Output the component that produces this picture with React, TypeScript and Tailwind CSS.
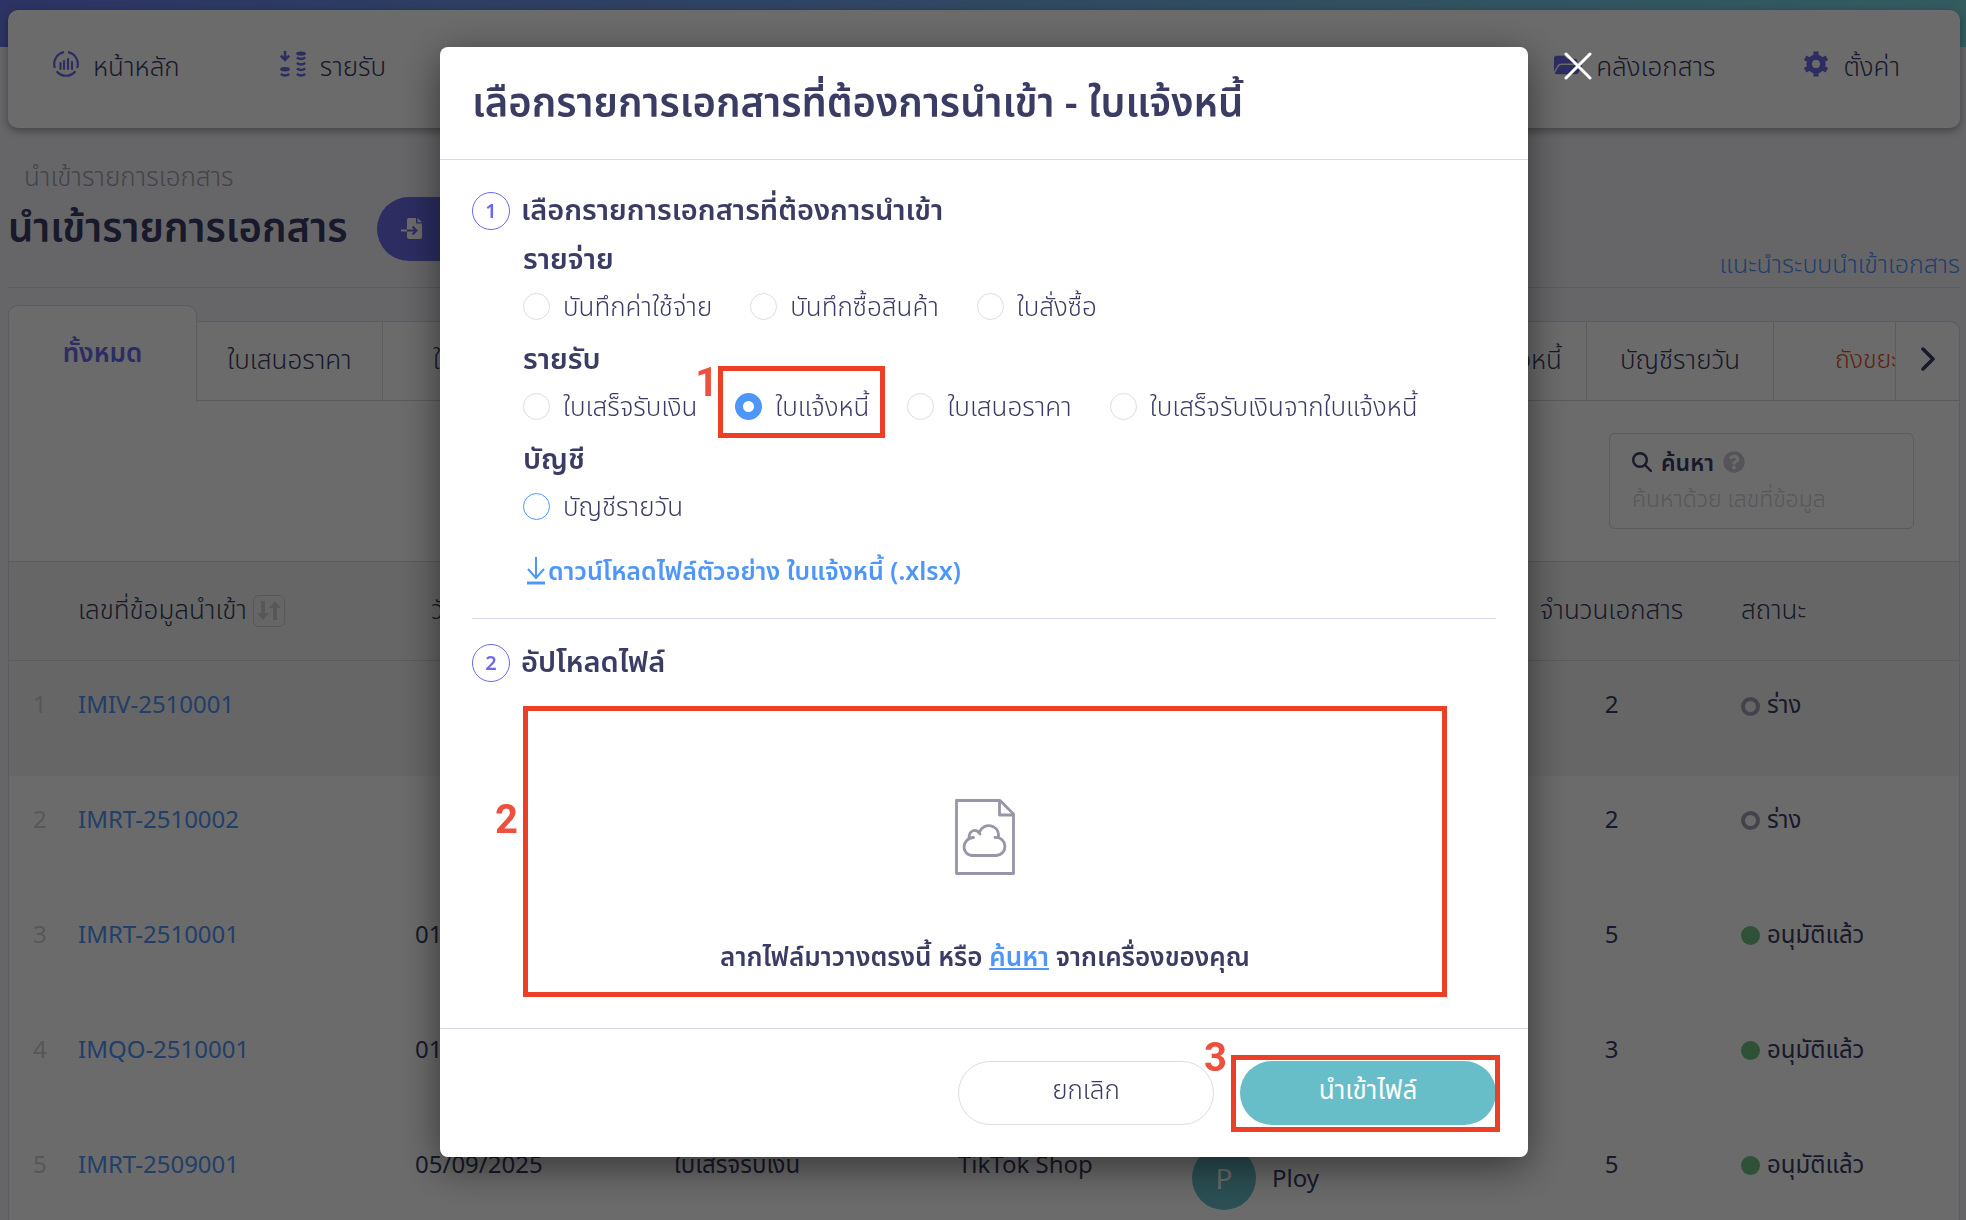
import { useState } from "react";
import type { ReactNode } from "react";
import { FaFolderOpen, FaQuestionCircle } from "react-icons/fa";

// -------- DATA --------

const EXPENSE_TYPES = ["บันทึกค่าใช้จ่าย", "บันทึกซื้อสินค้า", "ใบสั่งซื้อ"];
const INCOME_TYPES = ["ใบเสร็จรับเงิน", "ใบแจ้งหนี้", "ใบเสนอราคา", "ใบเสร็จรับเงินจากใบแจ้งหนี้"];
const ACCOUNT_TYPES = ["บัญชีรายวัน"];

interface ImportRow {
  code: string;
  date?: string;
  type?: string;
  channel?: string;
  owner?: string;
  count: number;
  approved: boolean;
}

const ROWS: ImportRow[] = [
  { code: "IMIV-2510001", count: 2, approved: false },
  { code: "IMRT-2510002", count: 2, approved: false },
  { code: "IMRT-2510001", date: "01/10/2025", count: 5, approved: true },
  { code: "IMQO-2510001", date: "01/10/2025", count: 3, approved: true },
  {
    code: "IMRT-2509001",
    date: "05/09/2025",
    type: "ใบเสร็จรับเงิน",
    channel: "TikTok Shop",
    owner: "Ploy",
    count: 5,
    approved: true,
  },
];

// -------- ICONS --------

function HomeIcon() {
  return (
    <svg viewBox="0 0 26 26" className="size-[26px]" fill="none" stroke="currentColor" strokeWidth="2.2">
      <path d="M11 1.2A12 12 0 0 0 1.9 17M15 1.2A12 12 0 0 1 24.1 17M3.6 20.2a12 12 0 0 0 18.8 0" />
      <path d="M7.5 12v6M11 10v8M15 8v10M19 11v7" strokeLinecap="round" />
    </svg>
  );
}

function CoinsIcon() {
  return (
    <svg viewBox="0 0 26 26" className="size-[26px]" fill="none" stroke="currentColor" strokeWidth="2.6">
      <path d="M5 0v8M.8 4.600l4.200 4.200 4.200-4.200" />
      <ellipse cx="5" cy="18.2" rx="4.8" ry="2.2" fill="currentColor" stroke="none" />
      <path d="M.8 23q4.2 3 8.4 0M16.8 6.500q4.200 3 8.400 0M16.800 12q4.200 3 8.400 0M16.800 17.500q4.200 3 8.400 0M16.800 23q4.200 3 8.400 0" />
      <ellipse cx="21" cy="2.600" rx="4.800" ry="2.200" fill="currentColor" stroke="none" />
    </svg>
  );
}

function GearIcon() {
  return (
    <svg viewBox="0 0 26 26" className="size-[26px]" fill="none" stroke="currentColor">
      <circle cx="13" cy="13" r="6.800" strokeWidth="5.600" />
      <path
        d="M13 6V.5M13 20v5.500M6.940 9.500 2.170 6.750M19.060 16.500l4.770 2.750M6.940 16.500l-4.770 2.750M19.060 9.500l4.770-2.750"
        strokeWidth="5.200"
      />
    </svg>
  );
}

function ImportIcon() {
  return (
    <svg viewBox="0 0 22 22" className="size-[22px]" fill="none">
      <path d="M8 0h7v5.500h6V19a2 2 0 0 1-2 2H8a2 2 0 0 1-2-2V2a2 2 0 0 1 2-2z" fill="#fff" />
      <path d="M16.500 0 21 4.300h-4.500z" fill="#fff" />
      <path d="M0 12.500h6" stroke="#fff" strokeWidth="2" />
      <path d="M6 12.500h9M11.500 8.500l4 4-4 4" stroke="#6b6be9" strokeWidth="2" />
    </svg>
  );
}

function SortIcon() {
  return (
    <svg viewBox="0 0 24 20" className="h-5 w-6" fill="currentColor">
      <path d="M4 0h4v12h4l-6 7-6-7h4zM16 19h4V7h4l-6-7-6 7h4z" />
    </svg>
  );
}

function SearchIcon() {
  return (
    <svg viewBox="0 0 20 20" className="size-5" fill="none" stroke="currentColor" strokeWidth="2.400">
      <circle cx="8" cy="8" r="6.800" />
      <path d="m13 13 6 6" strokeLinecap="round" />
    </svg>
  );
}

function CloudFileIcon() {
  return (
    <svg viewBox="0 0 60 76" className="h-[76px] w-[60px] text-[#9796a8]" fill="none" stroke="currentColor" strokeWidth="2.800" strokeLinejoin="round">
      <path d="M1.500 1.500H45L58.500 15v59.500h-57z" />
      <path d="M44.500 1.500V16h14" />
      <path d="M18 56.500C5 56 7 39 18.500 38.500M14 39c0-8 7-10 11-4M24.500 33c4-10 20-8 19 5M40 38.500c12-1 14 17 1 18H18" strokeLinecap="round" />
    </svg>
  );
}

// -------- PAGE BEHIND THE DIALOG --------

function NavLink({ icon, children }: { icon: ReactNode; children: ReactNode }) {
  return (
    <a href="#" className="flex items-start gap-[14px] text-[#3b3c64]">
      <span className="pt-[5px] text-[#6b6be9]">{icon}</span>
      <span className="leading-10">{children}</span>
    </a>
  );
}

function TopNav() {
  return (
    <nav className="flex h-[118px] items-start justify-between rounded-[10px] bg-white pt-9 pr-[60px] pl-[45px] text-[26px] shadow-[0_3px_8px_rgba(0,0,0,0.35)]">
      <div className="flex gap-[100px]">
        <NavLink icon={<HomeIcon />}>หน้าหลัก</NavLink>
        <NavLink icon={<CoinsIcon />}>รายรับ</NavLink>
      </div>
      <div className="flex gap-[88px]">
        <NavLink icon={<FaFolderOpen size={28} />}>คลังเอกสาร</NavLink>
        <NavLink icon={<GearIcon />}>ตั้งค่า</NavLink>
      </div>
    </nav>
  );
}

function Tabs() {
  return (
    <div className="flex items-end text-[26px]">
      <button className="relative z-10 -mb-px h-[97px] w-[189px] rounded-t-[10px] border border-b-0 border-[#d8d8e4] bg-white pb-1 font-semibold text-[#6b6be9]">
        ทั้งหมด
      </button>
      <div className="flex h-20 min-w-0 flex-1 justify-between overflow-hidden rounded-tr-[10px] border border-l-0 border-[#d8d8e4] bg-white">
        <div className="flex *:pb-1">
          <button className="w-[186px] border-r border-[#d8d8e4]">ใบเสนอราคา</button>
          <button className="w-[186px] pl-2">ใบแจ้งหนี้</button>
        </div>
        <div className="flex *:pb-1">
          <button className="px-6">ใบเสร็จรับเงินจากใบแจ้งหนี้</button>
          <button className="w-[187px] border-l border-[#d8d8e4]">บัญชีรายวัน</button>
          <button className="w-[122px] overflow-hidden border-l border-[#d8d8e4] pl-[61px] text-left text-[25px] whitespace-nowrap text-[#e0512f]">
            ถังขยะ
          </button>
          <button aria-label="ถัดไป" className="flex w-16 items-center justify-center border-l border-[#d8d8e4]">
            <svg viewBox="0 0 14 24" className="h-6 w-[14px]" fill="none" stroke="currentColor" strokeWidth="3.500" strokeLinecap="round" strokeLinejoin="round">
              <path d="m2 2 10 10L2 22" />
            </svg>
          </button>
        </div>
      </div>
    </div>
  );
}

function SearchBox() {
  return (
    <div className="flex h-40 items-start justify-end pt-8 pr-[45px]">
      <div className="h-24 w-[305px] rounded-md border border-[#d8d8e4] px-[22px] pt-3 text-[23px]">
        <label htmlFor="search" className="flex h-8 items-center gap-[9px] font-semibold">
          <SearchIcon />
          ค้นหา
          <FaQuestionCircle size={22} className="text-[#c9c9d4]" />
        </label>
        <input id="search" placeholder="ค้นหาด้วย เลขที่ข้อมูล" className="h-10 w-full outline-none placeholder:text-[#cfcfd4]" />
      </div>
    </div>
  );
}

function Status({ approved }: { approved: boolean }) {
  return (
    <span className="flex items-center gap-[7px]">
      {approved ? (
        <span className="mt-1 size-[19px] rounded-full bg-[#6fc083]" />
      ) : (
        <span className="mt-1 size-[19px] rounded-full border-4 border-[#a09fb2]" />
      )}
      {approved ? "อนุมัติแล้ว" : "ร่าง"}
    </span>
  );
}

function ImportTable() {
  return (
    <table className="w-full table-fixed text-left leading-9">
      <colgroup>
        <col className="w-[61px]" />
        <col className="w-[337px]" />
        <col className="w-[259px]" />
        <col className="w-[284px]" />
        <col className="w-[234px]" />
        <col />
        <col className="w-[243px]" />
        <col className="w-[226px]" />
      </colgroup>
      <thead>
        <tr className="h-[99px] border-y border-[#d8d8e4] bg-[#f3f3f3] text-[26px] *:px-2 *:pb-1 *:font-light">
          <th />
          <th>
            <span className="flex items-center gap-[6px]">
              เลขที่ข้อมูลนำเข้า
              <button aria-label="เรียงลำดับ" className="mt-1 flex size-8 items-center justify-center rounded-md border border-[#d0d0d0] text-[#d0d0d0]">
                <SortIcon />
              </button>
            </span>
          </th>
          <th><span className="pl-4">วันที่</span></th>
          <th>ประเภท</th>
          <th>ช่องทาง</th>
          <th>ผู้นำเข้า</th>
          <th className="text-center">จำนวนเอกสาร</th>
          <th>สถานะ</th>
        </tr>
      </thead>
      <tbody className="font-normal">
        {ROWS.map((row, index) => (
          <tr key={row.code} className="h-[115px] align-top first:bg-[#f3f3f3] *:px-2 *:pt-[25px]">
            <td><span className="pl-4 text-[#cfcfcf]">{index + 1}</span></td>
            <td><a href="#" className="text-[#4f96f9]">{row.code}</a></td>
            <td>{row.date}</td>
            <td>{row.type}</td>
            <td>{row.channel}</td>
            <td>
              {row.owner && (
                <span className="flex items-center gap-4">
                  <span className="flex size-16 items-center justify-center rounded-full bg-[#67bdc8] text-[28px] text-white">
                    {row.owner[0]}
                  </span>
                  {row.owner}
                </span>
              )}
            </td>
            <td className="text-center">{row.count}</td>
            <td><Status approved={row.approved} /></td>
          </tr>
        ))}
      </tbody>
    </table>
  );
}

// -------- DIALOG --------

function Marker({ box, label, children }: { box: string; label: string; children: string }) {
  return (
    <>
      <span className={`pointer-events-none absolute border-[5px] border-[#eb4026] ${box}`} />
      <span className={`pointer-events-none absolute font-[Roboto,sans-serif] text-[40px] leading-10 font-bold text-[#ef4f3e] ${label}`}>
        {children}
      </span>
    </>
  );
}

interface RadioGroupProps {
  title: string;
  options: string[];
  value: string;
  onChange: (value: string) => void;
}

function RadioGroup({ title, options, value, onChange }: RadioGroupProps) {
  return (
    <fieldset className="h-[100px]">
      <legend className="h-[47px] text-[29px] leading-[34px] font-semibold">{title}</legend>
      <div className="flex gap-[38px] text-[26px]">
        {options.map((option) => (
          <label key={option} className="relative flex h-9 items-center gap-[13px] whitespace-nowrap">
            <input
              type="radio"
              name="document-type"
              checked={value === option}
              onChange={() => onChange(option)}
              className={
                option === "บัญชีรายวัน"
                  ? "size-[27px] appearance-none rounded-full border border-[#4f96f9]"
                  : "size-[27px] appearance-none rounded-full border border-[#dcdce6] checked:border-8 checked:border-[#4f96f9]"
              }
            />
            {option}
            {option === "ใบแจ้งหนี้" && (
              <Marker box="-top-[22px] -right-4 -bottom-[14px] -left-[17px]" label="-top-[25px] -left-10">
                1
              </Marker>
            )}
          </label>
        ))}
      </div>
    </fieldset>
  );
}

function StepTitle({ step, children }: { step: number; children: ReactNode }) {
  return (
    <h3 className="flex h-[38px] items-center gap-[11px] text-[29px] leading-9 font-semibold">
      <span className="flex size-[38px] items-center justify-center rounded-full border border-[#6b6be9] text-xl text-[#6b6be9]">
        {step}
      </span>
      <span className="pb-1">{children}</span>
    </h3>
  );
}

function ImportDialog() {
  const [docType, setDocType] = useState("ใบแจ้งหนี้");

  return (
    <div className="fixed inset-0 z-20 flex items-start justify-center bg-black/58 pt-[47px]">
      <div role="dialog" className="relative mr-[-2px] w-[1088px] rounded-lg bg-white shadow-[0_10px_40px_rgba(0,0,0,0.5)]">
        <button aria-label="ปิด" className="absolute top-[5px] left-full ml-9">
          <svg viewBox="0 0 28 28" className="size-7" stroke="#fff" strokeWidth="3" strokeLinecap="round">
            <path d="m2 2 24 24M26 2 2 26" />
          </svg>
        </button>

        <h2 className="h-[113px] border-b border-[#d8d8e4] px-8 pt-[27px] text-[40px] leading-[56px] font-semibold">
          เลือกรายการเอกสารที่ต้องการนำเข้า - ใบแจ้งหนี้
        </h2>

        <div className="px-8">
          <section className="h-[459px] border-b border-[#d8d8e4] pt-8">
            <StepTitle step={1}>เลือกรายการเอกสารที่ต้องการนำเข้า</StepTitle>
            <div className="pt-[11px] pl-[51px]">
              <RadioGroup title="รายจ่าย" options={EXPENSE_TYPES} value={docType} onChange={setDocType} />
              <RadioGroup title="รายรับ" options={INCOME_TYPES} value={docType} onChange={setDocType} />
              <RadioGroup title="บัญชี" options={ACCOUNT_TYPES} value={docType} onChange={setDocType} />
              <a href="#" className="mt-[10px] ml-[3px] flex h-10 items-center gap-[2px] text-[25px] font-semibold text-[#4f96f9]">
                <svg viewBox="0 0 20 28" className="h-7 w-5" fill="none" stroke="currentColor" strokeWidth="2">
                  <path d="M10 0v20M2 12l8 9 8-9" />
                  <path d="M1 26h18" strokeWidth="3" />
                </svg>
                ดาวน์โหลดไฟล์ตัวอย่าง ใบแจ้งหนี้ (.xlsx)
              </a>
            </div>
          </section>

          <section className="pt-[25px] pb-[31px]">
            <StepTitle step={2}>อัปโหลดไฟล์</StepTitle>
            <div className="relative mt-6 mr-[49px] ml-[51px] flex h-[291px] flex-col items-center pt-[93px] text-[26px] font-semibold">
              <Marker box="inset-0" label="top-[94px] -left-7">2</Marker>
              <CloudFileIcon />
              <p className="mt-[61px] leading-10">
                ลากไฟล์มาวางตรงนี้ หรือ{" "}
                <a href="#" className="text-[#4f96f9] underline">ค้นหา</a>{" "}
                จากเครื่องของคุณ
              </p>
            </div>
          </section>
        </div>

        <footer className="flex h-[129px] justify-end gap-[26px] border-t border-[#d8d8e4] px-8 pt-8 text-[26px]">
          <button className="h-16 w-64 rounded-full border border-[#dcdce6] pb-[7px]">ยกเลิก</button>
          <div className="relative h-16 w-64">
            <button className="size-full rounded-full bg-[#67bdc8] pb-[7px] font-normal text-white">นำเข้าไฟล์</button>
            <Marker box="-top-[6px] -right-1 -bottom-[7px] -left-[9px]" label="-top-[23px] -left-9">3</Marker>
          </div>
        </footer>
      </div>
    </div>
  );
}

// -------- APP --------

export default function App() {
  return (
    <div className="h-screen overflow-hidden bg-[#f3f3f8] bg-linear-to-r from-[#6b7bee] to-[#7adbe2] bg-[length:100%_47px] bg-no-repeat pt-[10px] pr-[6px] pl-2 font-['Noto_Sans','Noto_Sans_Thai',sans-serif] text-2xl font-light text-[#3b3c64]">
      <TopNav />

      <header className="flex h-[160px] items-end justify-between border-b border-[#d8d8e4]">
        <div className="h-[125px]">
          <p className="h-[34px] pl-4 text-[26px] leading-7 text-[#a09fb2]">นำเข้ารายการเอกสาร</p>
          <div className="flex h-[66px] items-center gap-[30px]">
            <h1 className="pb-1 text-[40px] leading-[56px] font-semibold">นำเข้ารายการเอกสาร</h1>
            <button className="flex h-16 w-64 items-center gap-4 rounded-full bg-[#6b6be9] px-6 font-normal text-white">
              <ImportIcon />
              นำเข้า
            </button>
          </div>
        </div>
        <a href="#" className="pb-2 text-[25px] leading-8 text-[#4f96f9]">แนะนำระบบนำเข้าเอกสาร</a>
      </header>

      <main className="pt-[17px]">
        <Tabs />
        <div className="border-x border-[#d8d8e4] bg-white">
          <SearchBox />
          <ImportTable />
        </div>
      </main>

      <ImportDialog />
    </div>
  );
}
